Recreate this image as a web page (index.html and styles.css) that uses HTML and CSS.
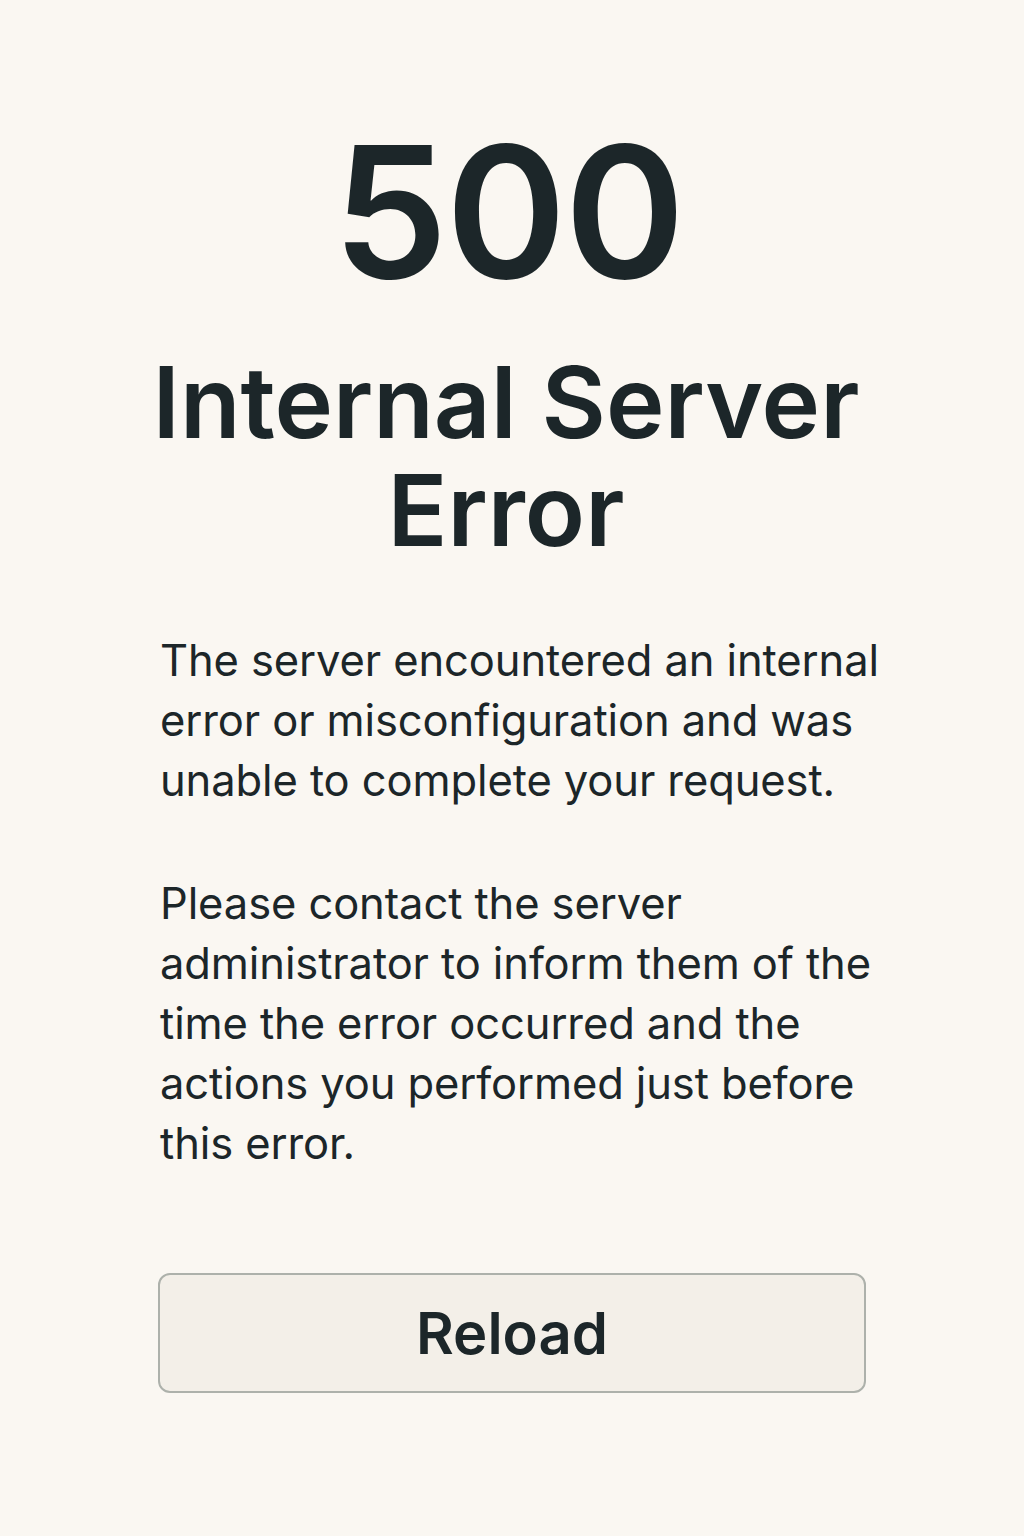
FILE: index.html
```html
<!DOCTYPE html>
<html lang="en">
<head>
<meta charset="utf-8">
<title>500 Internal Server Error</title>
<link rel="stylesheet" href="styles.css">
</head>
<body>
<main class="page">
  <h1 class="code">500</h1>
  <h2 class="title">Internal Server Error</h2>
  <p class="msg">The server encountered an internal error or misconfiguration and was unable to complete your request.</p>
  <p class="msg">Please contact the server administrator to inform them of the time the error occurred and the actions you performed just before this error.</p>
  <button class="reload" type="button">Reload</button>
</main>
</body>
</html>
```

FILE: styles.css
```css
html, body {
  margin: 0;
  padding: 0;
}
body {
  background: #faf7f2;
  color: #1c2629;
  font-family: Inter, "Noto Sans", sans-serif;
}
.page {
  width: 708px;
  margin: 0 auto;
  padding-top: 112px;
  display: flex;
  flex-direction: column;
}
.code {
  margin: 0;
  padding-right: 8px;
  font-size: 183px;
  font-weight: 600;
  line-height: 200px;
  text-align: center;
  letter-spacing: -2px;
}
.title {
  margin: 36px -14px 0 -26px;
  font-size: 99px;
  font-weight: 600;
  line-height: 108px;
  text-align: center;
  letter-spacing: 0;
}
.msg {
  margin: 66px -30px 0 0;
  font-size: 43.5px;
  line-height: 60px;
  font-weight: 400;
  letter-spacing: -0.1px;
  padding-left: 2px;
}
.msg + .msg {
  margin-top: 63px;
}
.reload {
  margin-top: 100px;
  height: 120px;
  width: 100%;
  background: #f3efe8;
  border: 2px solid #adb1ab;
  border-radius: 12px;
  font-family: Inter, "Noto Sans", sans-serif;
  font-size: 58px;
  font-weight: 600;
  color: #1c2629;
}
```
